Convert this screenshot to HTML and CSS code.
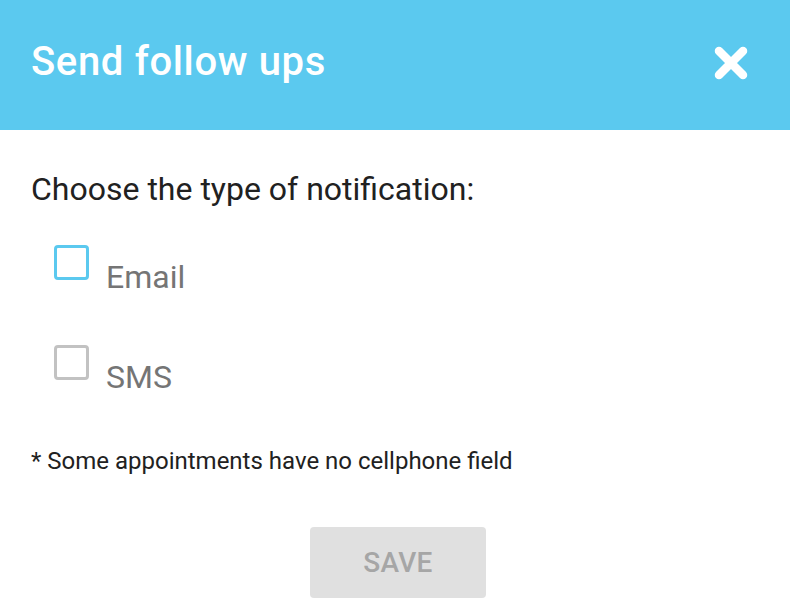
FILE: index.html
```html
<!DOCTYPE html>
<html>
<head>
<meta charset="utf-8">
<link rel="stylesheet" href="styles.css">
</head>
<body>
<div class="dialog">
  <header class="header">
    <h1 class="title">Send follow ups</h1>
    <button class="close" aria-label="Close">
      <svg width="34" height="34" viewBox="0 0 34 34"><path d="M5 5 L29 29 M29 5 L5 29" stroke="#fff" stroke-width="8.5" stroke-linecap="round"/></svg>
    </button>
  </header>
  <main class="body">
    <p class="prompt">Choose the type of notification:</p>
    <label class="option first">
      <span class="box box-active"></span>
      <span class="opt-label">Email</span>
    </label>
    <label class="option">
      <span class="box"></span>
      <span class="opt-label">SMS</span>
    </label>
    <p class="note">* Some appointments have no cellphone field</p>
    <div class="actions">
      <button class="save" disabled>SAVE</button>
    </div>
  </main>
</div>
</body>
</html>
```
FILE: styles.css
```css
* { box-sizing: border-box; }
html, body { margin: 0; padding: 0; background: #fff; }
body { font-family: Roboto, "Noto Sans", sans-serif; width: 790px; height: 610px; overflow: hidden; }
.header {
  height: 130px;
  background: #5bc9ef;
  display: flex;
  align-items: center;
  justify-content: space-between;
  padding: 0 42px 0 31px;
}
.title {
  margin: 0;
  color: #fff;
  font-weight: 500;
  font-size: 40px;
  letter-spacing: 0.65px;
  line-height: 48px;
  padding-bottom: 6px;
}
.close {
  background: none;
  border: 0;
  padding: 0;
  width: 34px;
  height: 34px;
  display: flex;
  margin-bottom: 4px;
}
.body { padding: 0 31px; }
.prompt {
  margin: 39px 0 0;
  font-size: 32px;
  color: #212121;
  line-height: 40px;
}
.option {
  display: flex;
  align-items: flex-start;
  margin-left: 23px;
  height: 100px;
}
.option.first { margin-top: 36px; }
.box {
  width: 35px;
  height: 35px;
  border: 3px solid #c2c2c2;
  border-radius: 4px;
  flex: none;
}
.box-active { border-color: #5bc9ef; }
.opt-label {
  margin-left: 17px;
  margin-top: 12px;
  font-size: 32px;
  color: #757575;
  line-height: 40px;
}
.note {
  margin: 1px 0 0;
  font-size: 24px;
  color: #212121;
  line-height: 30px;
}
.actions {
  display: flex;
  justify-content: center;
  margin-top: 51px;
  padding-left: 6px;
}
.save {
  width: 176px;
  height: 71px;
  background: #e0e0e0;
  border: 0;
  border-radius: 4px;
  color: #a6a6a6;
  font-family: Roboto, sans-serif;
  font-weight: 500;
  font-size: 28px;
  letter-spacing: 0.3px;
}
```
